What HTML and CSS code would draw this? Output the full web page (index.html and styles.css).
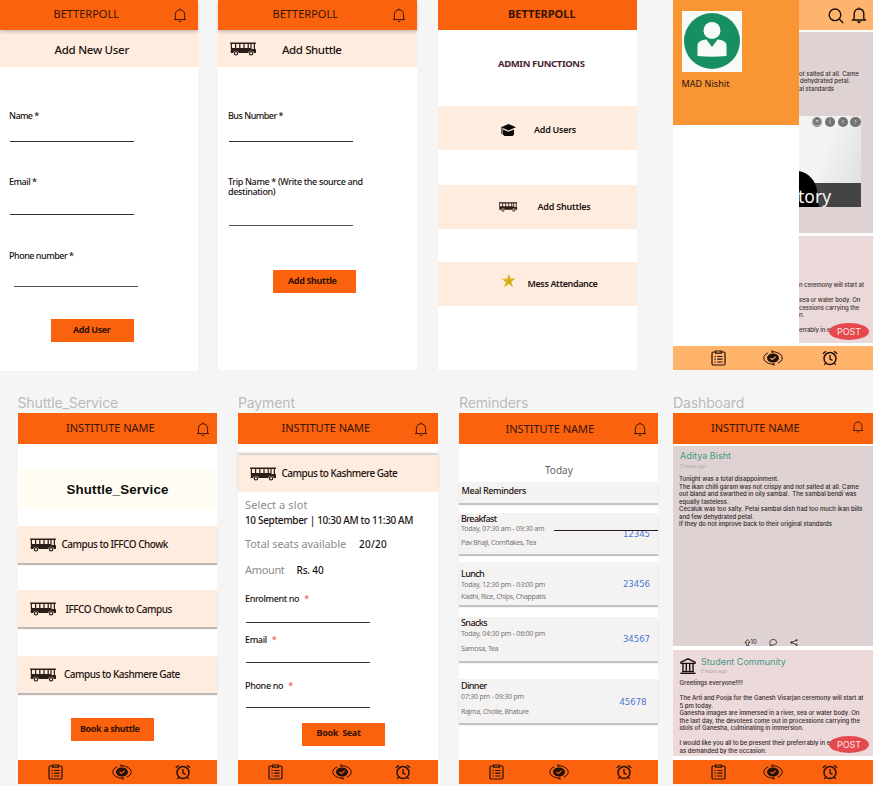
FILE: index.html
```
<!DOCTYPE html>
<html lang="en">
<head>
<meta charset="utf-8">
<title>Betterpoll screens</title>
<link rel="stylesheet" href="styles.css">
</head>
<body>
<svg class="defs" aria-hidden="true">
  <symbol id="bell" viewBox="0 0 14 15"><path d="M1 11.6h12M2.4 11.4V6.6C2.4 3.4 4.4 1.8 7 1.8s4.600 1.600 4.600 4.800v4.800M5.600 12.800a1.500 1.200 0 0 0 2.800 0M7 .5v1.200" fill="none" stroke="currentColor" stroke-width="1"/></symbol>
  <symbol id="bus" viewBox="0 0 26 14"><path fill-rule="evenodd" fill="currentColor" d="M0 .5h26v1.300h-1v5l1 .7v3.500h-2a3 3 0 0 0-5.800 0H8.800a3 3 0 0 0-5.800 0H.8V1.800H0zM2 2v4h3V2zM6.200 2v4h3V2zM10.400 2v4h3V2zM14.600 2v4h3V2zM18.800 2v4h1.600V2zM21.600 2v5h2.200V2z"/><circle cx="5.900" cy="11.300" r="1.700" fill="none" stroke="currentColor" stroke-width="1.200"/><circle cx="21.100" cy="11.300" r="1.700" fill="none" stroke="currentColor" stroke-width="1.200"/></symbol>
  <symbol id="list" viewBox="0 0 15 16"><path d="M4 2H2.200A1.200 1.200 0 0 0 1 3.200v10.600A1.200 1.200 0 0 0 2.200 15h10.600a1.200 1.200 0 0 0 1.200-1.200V3.200A1.200 1.200 0 0 0 12.800 2H11M4.500 1h6v2.200h-6zM6.200 6.500h5.300M6.200 9.200h5.300M6.200 12h5.300M3.500 6.500h1.300M3.500 9.200h1.300M3.500 12h1.300" fill="none" stroke="currentColor" stroke-width="1.200"/></symbol>
  <symbol id="sync" viewBox="0 0 20 16"><ellipse cx="10" cy="8" rx="6" ry="4.500" fill="currentColor"/><path d="M7.500 8l1.900 1.500L12.800 6.600" fill="none" stroke="var(--bar)" stroke-width="1.100"/><path d="M5.200 2.900C2.300 4 .8 5.800.8 8s1.600 4 4.600 5.200c1.300.6 2.600.9 4.100 1M14.800 13.100c2.900-1.100 4.400-2.900 4.400-5.100s-1.600-4-4.600-5.200c-1.300-.6-2.600-.9-4.100-1" fill="none" stroke="currentColor" stroke-width="1"/><path d="M8.300 0l2.900 1.700-2.400 1.500zM11.700 16l-2.900-1.700 2.400-1.500z" fill="currentColor"/></symbol>
  <symbol id="alarm" viewBox="0 0 16 16"><circle cx="8" cy="8.600" r="6" fill="none" stroke="currentColor" stroke-width="1.500"/><path d="M8 5v4l2.500 1.400M.8 3.800L4 1.200M15.200 3.800L12 1.200M3.600 13.200l-1.200 1.600M12.400 13.200l1.200 1.600" fill="none" stroke="currentColor" stroke-width="1.300"/></symbol>
</svg>

<main class="canvas">
<div class="row top">

  <section class="screen add-user">
    <header class="bar raised"><h1>BETTERPOLL</h1><svg class="bell"><use href="#bell"/></svg></header>
    <div class="band sub"><h2>Add New User</h2></div>
    <label class="field f1">Name *</label><i class="rule"></i>
    <label class="field f2">Email *</label><i class="rule r2"></i>
    <label class="field f3">Phone number *</label><i class="rule soft r3"></i>
    <button class="btn">Add User</button>
  </section>

  <section class="screen add-shuttle">
    <header class="bar raised"><h1>BETTERPOLL</h1><svg class="bell"><use href="#bell"/></svg></header>
    <div class="band sub"><svg class="bus"><use href="#bus"/></svg><h2>Add Shuttle</h2></div>
    <label class="field f1">Bus Number *</label><i class="rule"></i>
    <label class="field two">Trip Name * (Write the source and
destination)</label><i class="rule soft r2"></i>
    <button class="btn">Add Shuttle</button>
  </section>

  <section class="screen admin">
    <header class="bar"><h1>BETTERPOLL</h1></header>
    <h2>ADMIN FUNCTIONS</h2>
    <div class="band a1"><svg class="cap" viewBox="0 0 15 12"><path d="M7.500 0L15 3.300 7.500 6.600 0 3.300zM2 5.600l5.500 2.200L13 5.600v4.800L11.500 12h-8L2 10.400zM.4 3.500h1.100v6.800H.4z" fill="#0b0705"/></svg><span>Add Users</span></div>
    <div class="band a2"><svg class="bus" viewBox="0 0 26 14"><use href="#bus" width="26" height="14"/></svg><span>Add Shuttles</span></div>
    <div class="band a3"><svg class="star" viewBox="0 0 15 14"><path d="M8 0l1.500 4.600 5.200-.2-4.300 3.200 1.600 5.600-4.400-3.300-4.600 3.500 1.700-5.600L.3 4.800l5.400-.1z" fill="#e6bd20"/><path d="M8 2v6l-4 4M8 8l5-3M8 8l3 4M8 8L3 6" stroke="#a88312" stroke-width=".5" fill="none"/></svg><span>Mess Attendance</span></div>
  </section>

  <section class="screen menu">
    <div class="split">
      <aside class="drawer">
        <div class="profile">
          <svg class="avatar" viewBox="0 0 60 61"><path fill="#f7faf6" d="M0 0h60v61H0z"/><circle cx="30" cy="30" r="28" fill="#178f62"/><circle cx="30" cy="19.500" r="8.500" fill="#f7faf6"/><path d="M15.500 45V35c0-4 3-6 9-6.500L30 36l5.500-7.500c6 .5 9 2.500 9 6.500v10q-14.500 1.500-29 0z" fill="#f7faf6"/><path d="M26.500 29h7L30 35z" fill="#178f62"/></svg>
          <p>MAD Nishit</p>
        </div>
      </aside>
      <div class="peek">
        <div class="peek-bar">
          <svg class="search" viewBox="0 0 16 16"><circle cx="7" cy="6.800" r="5.800"/><path d="M11.200 11l4 4"/></svg>
          <svg class="ring" viewBox="0 0 16 17"><path d="M.8 13h14.400M2.800 12.800C3.500 11 3.200 9 3.200 7c0-3.400 2-5 4.800-5s4.800 1.600 4.800 5c0 2-.3 4 .4 5.800M8 .5V2"/><path d="M5.500 14.200h5L8 16.400z" fill="#181008" stroke="none"/></svg>
        </div>
        <div class="peek-post">
          <p>ot salted at all. Came</p><p class="l2">dehydrated petal.</p><p>al standards</p>
          <div class="photo">
            <div class="tools"><i>⊗</i><i>i</i><i>‹</i><i>›</i></div>
            <div class="caption"></div>
            <svg class="hair" viewBox="0 0 20 36"><path d="M0 0c10 2 17 10 18 20 0 6 1 10 2 16H0z"/></svg>
            <span class="word">tory</span>
          </div>
        </div>
        <div class="peek-event">
          <p>n ceremony will start at</p>
          <p class="gap">sea or water body. On</p><p>cessions carrying the</p><p>n.</p>
          <p class="gap">errably in e</p>
          <b class="post">POST</b>
        </div>
      </div>
    </div>
    <nav class="tabs"><svg class="i1"><use href="#list"/></svg><svg class="i2"><use href="#sync"/></svg><svg class="i3"><use href="#alarm"/></svg></nav>
  </section>
</div>

<div class="row bottom">
  <div class="frame shuttle">
    <h3>Shuttle_Service</h3>
    <section class="screen">
      <header class="bar"><h1>INSTITUTE NAME</h1><svg class="bell"><use href="#bell"/></svg></header>
      <div class="heading">Shuttle_Service</div>
      <div class="band trip t1"><svg class="bus"><use href="#bus"/></svg><span>Campus to IFFCO Chowk</span></div>
      <div class="band trip t2"><svg class="bus"><use href="#bus"/></svg><span>IFFCO Chowk to Campus</span></div>
      <div class="band trip t3"><svg class="bus"><use href="#bus"/></svg><span>Campus to Kashmere Gate</span></div>
      <button class="btn">Book a shuttle</button>
      <nav class="tabs"><svg class="i1"><use href="#list"/></svg><svg class="i2"><use href="#sync"/></svg><svg class="i3"><use href="#alarm"/></svg></nav>
    </section>
  </div>

  <div class="frame payment">
    <h3>Payment</h3>
    <section class="screen">
      <header class="bar"><h1>INSTITUTE NAME</h1><svg class="bell"><use href="#bell"/></svg></header>
      <div class="band route"><svg class="bus"><use href="#bus"/></svg><span>Campus to Kashmere Gate</span></div>
      <p class="line p1"><span class="g slot">Select a slot</span></p>
      <p class="line p2"><span class="v when">10 September | 10:30 AM to 11:30 AM</span></p>
      <p class="line p3"><span class="g seats">Total seats available</span><span class="v count">20/20</span></p>
      <p class="line p4"><span class="g amount">Amount</span><span class="v price">Rs. 40</span></p>
      <label class="field q1">Enrolment no<em>*</em></label><i class="rule"></i>
      <label class="field q2">Email<em>*</em></label><i class="rule"></i>
      <label class="field q3">Phone no<em>*</em></label><i class="rule"></i>
      <button class="btn">Book  Seat</button>
      <nav class="tabs"><svg class="i1"><use href="#list"/></svg><svg class="i2"><use href="#sync"/></svg><svg class="i3"><use href="#alarm"/></svg></nav>
    </section>
  </div>

  <div class="frame reminders">
    <h3>Reminders</h3>
    <section class="screen">
      <header class="bar"><h1>INSTITUTE NAME</h1><svg class="bell"><use href="#bell"/></svg></header>
      <p class="today">Today</p>
      <div class="card title">Meal Reminders</div>
      <div class="card meal breakfast"><div><h4>Breakfast</h4><p>Today, 07:30 am - 09:30 am</p><p class="food">Pav Bhaji, Cornflakes, Tea</p></div><b>12345</b><i class="strike"></i></div>
      <div class="card meal lunch"><div><h4>Lunch</h4><p>Today, 12:30 pm - 03:00 pm</p><p class="food">Kadhi, Rice, Chips, Chappatis</p></div><b>23456</b></div>
      <div class="card meal snacks"><div><h4>Snacks</h4><p>Today, 04:30 pm - 06:00 pm</p><p class="food">Samosa, Tea</p></div><b>34567</b></div>
      <div class="card meal dinner"><div><h4>Dinner</h4><p>07:30 pm - 09:30 pm</p><p class="food">Rajma, Cholle, Bhature</p></div><b>45678</b></div>
      <nav class="tabs"><svg class="i1"><use href="#list"/></svg><svg class="i2"><use href="#sync"/></svg><svg class="i3"><use href="#alarm"/></svg></nav>
    </section>
  </div>

  <div class="frame dashboard">
    <h3>Dashboard</h3>
    <section class="screen">
      <header class="bar"><h1>INSTITUTE NAME</h1><svg class="bell"><use href="#bell"/></svg></header>
      <article class="review">
        <h4>Aditya Bisht</h4><small>5 hours ago</small>
        <p class="copy">Tonight was a total disappoinment.
The ikan chilli garam was not crispy and not salted at all. Came
out bland and swarthed in oily sambal.  The sambal bendi was
equally tasteless.
Cecaluk was too salty. Petai sambal dish had too much ikan bills
and few dehydrated petal.
If they do not improve back to their original standards</p>
        <div class="actions">
          <svg class="up" viewBox="0 0 7 8"><path d="M3.500.6L6.400 4H4.800v3.400H2.200V4H.6z"/></svg><span>10</span>
          <svg class="chat" viewBox="0 0 8 7"><path d="M2 6.300H.8l.6-1.200C-.2 2.600 1.800.5 4.200.5s3.300 1.300 3.300 2.700S6.300 5.900 4.200 5.900z"/></svg>
          <svg class="share" viewBox="0 0 8 7"><path d="M6.500 1.200L1.500 3.500l5 2.200"/><circle cx="1.400" cy="3.500" r=".8"/><circle cx="6.600" cy="1.200" r=".7"/><circle cx="6.600" cy="5.800" r=".7"/></svg>
        </div>
      </article>
      <article class="event">
        <div class="who">
          <svg class="bank" viewBox="0 0 16 16"><path d="M1 5.400V4.200L8 .8l7 3.400v1.200zM2 13.400h12M.5 15.300h15M3 6v6.500M6.300 6v6.500M9.700 6v6.500M13 6v6.500"/></svg>
          <div><h4>Student Community</h4><small>5 hours ago</small></div>
        </div>
        <p class="copy">Greetings everyone!!!!

The Arti and Pooja for the Ganesh Visarjan ceremony will start at
5 pm today.
Ganesha images are immersed in a river, sea or water body. On
the last day, the devotees come out in processions carrying the
idols of Ganesha, culminating in immersion.

I would like you all to be present their preferrably in e
as demanded by the occasion.</p>
        <b class="post">POST</b>
      </article>
      <nav class="tabs"><svg class="i1"><use href="#list"/></svg><svg class="i2"><use href="#sync"/></svg><svg class="i3"><use href="#alarm"/></svg></nav>
    </section>
  </div>
</div>
</main>
</body>
</html>
```
FILE: styles.css
```
* { box-sizing: border-box; margin: 0; padding: 0; }
body { width: 873px; height: 786px; overflow: hidden; background: #f5f5f5; font: 9px/12px "Noto Sans", sans-serif; color: #1c1310; }
.defs { position: absolute; width: 0; height: 0; }
svg { display: block; flex: none; overflow: visible; }
i, em { font-style: normal; }
h1, h2, h3, h4 { font-weight: 400; }

.canvas { display: flex; flex-direction: column; }
.row { display: flex; align-items: flex-start; }
.row.top { height: 396px; }
.screen { --bar: #fa620e; display: flex; flex-direction: column; align-items: flex-start; height: 371px; background: #fff; white-space: nowrap; flex: none; }
.bar { display: flex; align-items: center; align-self: stretch; height: 30px; background: var(--bar); flex: none; position: relative; color: #361506; }
.bar h1 { font-size: 11px; line-height: 14px; margin-top: -2px; }
.raised { box-shadow: 0 2px 3px #0003; z-index: 1; }
.bell { width: 14px; height: 15px; color: #401806; }
.band { display: flex; align-items: center; align-self: stretch; background: #feecdf; flex: none; }
.bus { width: 26px; height: 14px; color: #2b1d18; }
.sub { height: 37px; }
.sub h2 { margin-top: 2px; font-size: 11.500px; font-weight: 500; line-height: 14px; }
.field { display: block; margin-left: 9px; font-weight: 500; line-height: 12px; }
.rule { display: block; width: 124px; height: 1px; margin: 19px 0 0 10px; background: #333; flex: none; }
.soft { background: #555; }
.btn { display: block; width: 83px; height: 23px; border: 0; background: var(--bar); font: 700 9px/12px "Noto Sans", sans-serif; color: #321304; text-align: left; white-space: pre; flex: none; }

/* add user */
.add-user { width: 198px; }
.add-user h1 { margin-left: 53.500px; }
.add-user .bell { margin: 1px 0 0 54px; }
.add-user h2 { margin-left: 54.500px; letter-spacing: -.28px; }
.add-user .f1 { margin-top: 43px; letter-spacing: -.6px; }
.add-user .f2 { margin-top: 34px; letter-spacing: -.48px; }
.add-user .r2 { margin-top: 26px; }
.add-user .f3 { margin-top: 35px; letter-spacing: -.49px; }
.add-user .r3 { margin: 24px 0 0 13.500px; }
.add-user .btn { margin: 32px 0 0 50.500px; padding: 0 0 2px 22.500px; letter-spacing: -.4px; }

/* add shuttle */
.add-shuttle { width: 199px; height: 370px; margin-left: 20px; }
.add-shuttle h1 { margin-left: 54.500px; }
.add-shuttle .bell { margin: 1px 0 0 54px; }
.add-shuttle .bus { margin: 0 0 0 12px; }
.add-shuttle h2 { margin-left: 26px; letter-spacing: -.41px; }
.add-shuttle .field { margin-left: 10px; }
.add-shuttle .f1 { margin-top: 43px; letter-spacing: -.52px; }
.add-shuttle .rule { margin-left: 11px; }
.add-shuttle .two { margin-top: 34.500px; line-height: 10.500px; letter-spacing: -.36px; white-space: pre; }
.add-shuttle .r2 { margin-top: 27.500px; }
.add-shuttle .btn { height: 22.500px; margin: 44px 0 0 54.500px; padding-left: 15.500px; letter-spacing: -.36px; }

/* admin */
.admin { width: 199px; height: 370px; margin-left: 21px; }
.admin h1 { margin-left: 70px; font-weight: 700; }
.admin h2 { margin: 28px 0 0 60px; font-size: 9.500px; line-height: 12px; font-weight: 700; letter-spacing: -.38px; color: #4a2630; }
.admin .band { height: 43.500px; font-weight: 600; }
.admin .a1 span { padding-top: 4px; }
.a1 { margin-top: 36px; letter-spacing: -.27px; }
.a2 { margin-top: 35.500px; letter-spacing: -.22px; }
.a3 { margin-top: 33.500px; letter-spacing: -.38px; }
.cap { width: 15px; height: 12px; margin: 5px 18px 0 63px; }
.admin .bus { width: 20px; height: 10px; margin: 0 19.500px 0 60px; }
.star { width: 15px; height: 14px; margin: -6px 11.500px 0 63px; }

/* menu */
.menu { width: 200px; height: 370px; margin-left: 36px; }
.menu.screen { --bar: #ffb26a; }
.split { display: flex; width: 200px; height: 346px; }
.drawer { width: 126px; }
.profile { height: 125px; background: #f99533; padding: 11px 0 0 8.500px; }
.avatar { width: 60px; height: 61px; }
.profile p { margin-top: 6px; letter-spacing: .06px; }
.peek { width: 74px; overflow: hidden; font: 500 6px/7.500px Inter, sans-serif; color: #3c3334; }
.peek-bar { display: flex; height: 30px; background: #ffb46e; }
.peek-bar svg, .bank { fill: none; stroke: #181008; stroke-width: 1.400; }
.search { width: 16px; height: 16px; margin: 8px 0 0 29px; }
.ring { width: 16px; height: 17px; margin: 7px 0 0 7px; }
.peek-post { height: 201px; margin-top: 2px; padding-top: 37.500px; background: #ded2d2; }
.peek-post .l2 { padding-left: 1px; }
.photo { position: relative; width: 62px; height: 91px; margin-top: 24px; background: linear-gradient(110deg, #f3f3f3 40%, #ddd 100%); }
.tools { display: flex; gap: 2.500px; padding: 1px 0 0 13px; }
.tools i { width: 10.300px; height: 10.300px; border-radius: 50%; background: #737373; color: #ddd; font: 7px/10px Inter, sans-serif; text-align: center; }
.hair { position: absolute; left: 0; bottom: 0; width: 20px; height: 36px; }
.caption { position: absolute; left: 0; right: 0; bottom: 0; height: 24px; background: #444; }
.word { position: absolute; left: -1px; bottom: -2px; color: #f5f5f5; font: 17.500px/25px "Noto Sans", sans-serif; }
.peek-event { position: relative; height: 107px; margin-top: 3px; padding-top: 45px; background: #ebd8d8; letter-spacing: -.08px; }
.peek-event .gap { margin-top: 7.500px; }
.post { position: absolute; width: 40px; height: 17px; border-radius: 50%; background: #e5484d; color: #fbe6e4; font: 400 9px/17px Inter, sans-serif; text-align: center; letter-spacing: 0; }
.peek-event .post { left: 30px; top: 87px; }
.tabs { display: flex; align-items: center; align-self: stretch; height: 24px; margin-top: auto; background: var(--bar); color: #24100a; flex: none; }
.i1 { width: 15px; height: 16px; margin-left: 30px; }
.i2 { width: 20px; height: 16px; margin-left: 49px; }
.i3 { width: 16px; height: 16px; margin-left: 43px; }
.menu .i1, .dashboard .i1 { margin-left: 38px; }
.menu .i2, .dashboard .i2 { margin-left: 37px; }
.menu .i3, .dashboard .i3 { margin-left: 38.500px; }

/* titled frames */
.frame { flex: none; }
.frame h3 { height: 17px; font: 14px/14px Inter, sans-serif; letter-spacing: -.12px; color: #bbb; }
.frame .bar { height: 31px; }
.frame .bell { margin-top: 1px; }

.shuttle { width: 199.500px; margin-left: 17.500px; }
.shuttle h1 { margin-left: 48.500px; }
.shuttle .bell { width: 14px; margin-left: 41.500px; }
.heading { align-self: stretch; height: 41px; margin: 25px 1px 0; background: #fffdf3; font: 700 13.300px/41px "Liberation Sans", sans-serif; letter-spacing: .15px; color: #0d0d0d; padding-left: 48px; }
.trip { height: 37px; font-size: 10px; box-shadow: 0 2px 1px #bdb8b6; letter-spacing: -.5px; font-weight: 500; }
.trip span { margin-top: -1px; }
.trip .bus { margin: 0 6px 0 12px; }
.t1 { margin-top: 16px; }
.t2 { margin-top: 27px; }
.t2 span { margin-top: 1px; }
.t3 { margin-top: 29px; }
.t2 .bus { margin-right: 10px; }
.t3 .bus { margin-right: 8.500px; }
.shuttle .btn { margin: 25px 0 0 53.500px; padding: 0 0 2px 9px; letter-spacing: -.39px; }

.payment { width: 199.500px; margin-left: 21px; }
.payment h1 { margin-left: 43.500px; }
.payment .bell { margin-left: 44px; }
.route { height: 37px; margin-top: 11px; box-shadow: 0 -2px 2px #0003; font-size: 10px; font-weight: 500; letter-spacing: -.5px; }
.route .bus { margin: 0 5.500px 0 12px; }
.route span { margin-top: -1px; }
.line { display: flex; height: 12px; padding-left: 7px; flex: none; }
.g { font-size: 11px; color: #8c8c8c; }
.v { font-size: 10px; font-weight: 500; }
.p1 { margin-top: 7px; }
.p2 { margin-top: 3px; }
.p3 { margin-top: 12px; }
.p4 { margin-top: 14px; }
.slot { letter-spacing: .1px; }
.when { letter-spacing: -.35px; }
.seats { width: 114px; letter-spacing: -.1px; }
.amount { width: 51.500px; letter-spacing: -.34px; }
.count { letter-spacing: .25px; }
.price { letter-spacing: -.16px; }
.payment .field { margin-left: 7px; letter-spacing: -.35px; }
.payment .field em { margin-left: 5px; color: #ef5660; }
.payment .rule { margin-left: 7.500px; }
.payment .q1 { margin-top: 17px; }
.payment .q1 + .rule { margin-top: 17px; }
.payment .q2 { margin-top: 11px; }
.payment .q2 + .rule { margin-top: 16px; }
.payment .q3 { margin-top: 17px; }
.payment .q3 + .rule { margin-top: 15px; }
.payment .btn { margin: 14.500px 0 0 63.500px; padding: 0 0 2px 15px; letter-spacing: -.31px; }

.reminders { width: 199px; margin-left: 21.500px; }
.reminders .bar h1 { margin: 0 0 0 46.500px; }
.reminders .bell { margin-left: 39px; }
.today { margin: 20px 0 6px 86px; font-size: 10px; color: #666; }
.card { position: relative; align-self: stretch; background: #f5f2f2; box-shadow: 0 2px 1px #c4c2c2; flex: none; }
.title { height: 21px; padding: 3px 0 0 2.500px; font-weight: 500; letter-spacing: -.37px; }
.meal { display: flex; justify-content: space-between; align-items: center; padding: 0 8px 0 2px; }
.meal h4 { font-size: 9px; line-height: 12px; font-weight: 500; letter-spacing: -.6px; }
.meal p { font-size: 7px; line-height: 10px; letter-spacing: -.22px; color: #777; }
.meal .food { margin-top: 4px; letter-spacing: -.33px; }
.meal b { font: 8.500px/12px "DejaVu Sans", sans-serif; color: #4879d4; }
.breakfast { height: 41px; margin-top: 9.500px; }
.breakfast h4 { line-height: 10px; }
.breakfast div { margin-top: -4px; }
.breakfast b { margin-top: 2px; }
.lunch { height: 43px; margin-top: 8.500px; }
.lunch div { padding-top: 3px; }
.lunch .food { margin-top: 2px; }
.snacks { height: 44px; margin-top: 12px; }
.snacks div { margin-top: -8px; }
.snacks .food { margin-top: 5px; }
.dinner { height: 44px; margin-top: 18px; padding-right: 11.500px; }
.dinner div { margin-top: -6px; }
.dinner .food { margin-top: 5px; }
.dinner b { margin-top: 2px; }
.strike { position: absolute; right: 0; top: 17px; width: 104px; height: 1px; background: #241c28; }
.reminders .i2 { margin-left: 45px; }
.reminders .i3 { margin-left: 47px; }

.dashboard { width: 200px; margin-left: 15px; }
.dashboard h1 { margin-left: 38px; }
.dashboard .bell { width: 12px; height: 14px; margin: -3px 0 0 52px; }
.dashboard h4 { font: 9px/12px Inter, sans-serif; letter-spacing: .03px; color: #469886; }
.dashboard small { display: block; font: 4.500px/6px Inter, sans-serif; color: #a9a0a0; }
.copy { font: 500 6px/7.500px Inter, sans-serif; color: #2f2729; white-space: pre; }
.review, .event { align-self: stretch; flex: none; }
.review { display: flex; flex-direction: column; height: 200px; margin-top: 2px; padding: 4px 0 0 6px; background: #ded3d2; }
.review h4, .review small { margin-left: 1px; }
.review small { margin-top: 2px; }
.review .copy { margin-top: 5px; }
.actions { display: flex; align-items: center; height: 8px; margin-top: auto; padding-left: 64.500px; font: 6px/8px Inter, sans-serif; }
.actions svg { fill: none; stroke: #2f2729; stroke-width: .9; height: 7px; }
.up { width: 7px; }
.chat { width: 8px; margin-left: 12px; }
.share { width: 8px; margin-left: 13px; }
.event { position: relative; height: 106px; margin-top: 4px; padding: 6px 0 0 6.500px; background: #ecd9da; }
.who { display: flex; gap: 5.500px; }
.bank { width: 16px; height: 16px; margin-top: 2px; }
.who small { margin-top: 1px; }
.event .copy { margin-top: 4px; letter-spacing: -.015px; }
.event .post { left: 156px; top: 86px; }
```
